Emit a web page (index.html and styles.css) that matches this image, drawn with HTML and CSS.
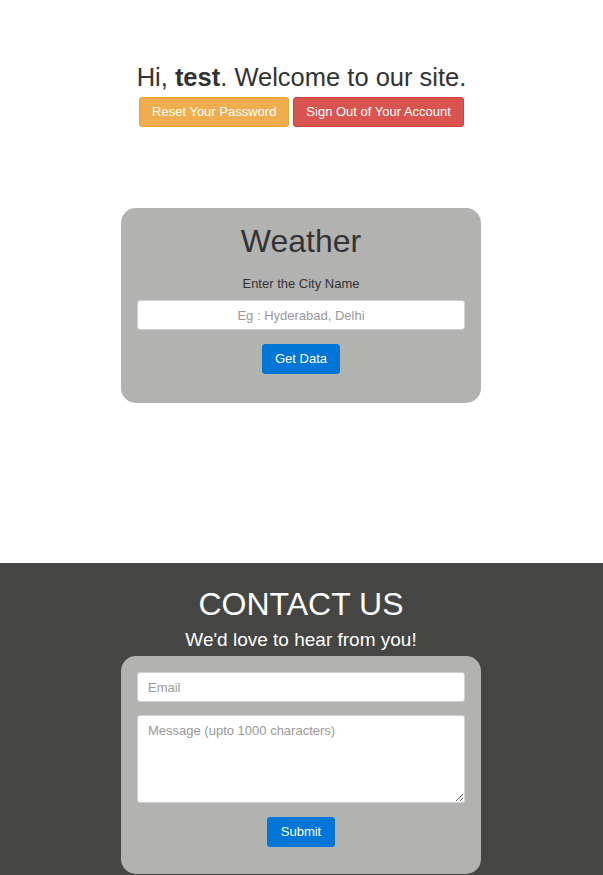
FILE: index.html
```html
<!DOCTYPE html>
<html>
<head>
<meta charset="utf-8">
<title>Welcome</title>
<link rel="stylesheet" href="styles.css">
</head>
<body>
<header class="greeting">
  <h2 class="greeting-title">Hi, <b>test</b>. Welcome to our site.</h2>
  <div class="greeting-actions">
    <a class="btn btn-warning" href="#">Reset Your Password</a>
    <a class="btn btn-danger" href="#">Sign Out of Your Account</a>
  </div>
</header>

<main class="weather-wrap">
  <form class="card weather-card">
    <h1 class="card-title">Weather</h1>
    <label class="city-label" for="city">Enter the City Name</label>
    <input class="field field-center" id="city" type="text" placeholder="Eg : Hyderabad, Delhi">
    <button class="btn btn-primary" type="button">Get Data</button>
  </form>
</main>

<section class="contact">
  <h1 class="contact-title">CONTACT US</h1>
  <p class="contact-sub">We'd love to hear from you!</p>
  <form class="card contact-card">
    <input class="field" type="email" placeholder="Email">
    <textarea class="field field-area" placeholder="Message (upto 1000 characters)"></textarea>
    <button class="btn btn-primary btn-submit" type="button">Submit</button>
  </form>
</section>
</body>
</html>
```
FILE: styles.css
```css
html, body {
  margin: 0;
  padding: 0;
}
body {
  font-family: "Liberation Sans", Arial, sans-serif;
  color: #333;
  background: #fff;
}

.greeting {
  padding-top: 62px;
  display: flex;
  flex-direction: column;
  align-items: center;
}
.greeting-title {
  margin: 0;
  font-size: 25.5px;
  font-weight: normal;
  line-height: 30px;
}
.greeting-title b {
  font-weight: bold;
}
.greeting-actions {
  display: flex;
  gap: 4px;
  margin-top: 5px;
}

.btn {
  display: inline-block;
  font-family: "Liberation Sans", Arial, sans-serif;
  font-size: 13px;
  line-height: 18px;
  padding: 5px 12px;
  border: 1px solid transparent;
  border-radius: 3px;
  color: #fff;
  text-decoration: none;
  cursor: pointer;
}
.btn-warning {
  background: #f0ad4e;
  border-color: #eea236;
}
.btn-danger {
  background: #d9534f;
  border-color: #d43f3a;
}
.btn-primary {
  background: #0275d8;
  border-color: #0275d8;
}
.btn-submit {
  padding-left: 13px;
  padding-right: 13px;
}

.weather-wrap {
  display: flex;
  justify-content: center;
  padding-top: 81px;
  padding-bottom: 160px;
  padding-right: 1px;
}

.card {
  box-sizing: border-box;
  width: 360px;
  background: #b2b2b1;
  border-radius: 15px;
  padding: 16px;
  display: flex;
  flex-direction: column;
  align-items: center;
}

.weather-card {
  padding-bottom: 29px;
}
.card-title {
  margin: 0;
  font-size: 32px;
  font-weight: normal;
  line-height: 35px;
}
.city-label {
  margin-top: 16px;
  font-size: 13px;
  line-height: 18px;
}
.field {
  box-sizing: border-box;
  width: 100%;
  height: 30px;
  margin: 0;
  border: 1px solid #d0d0d0;
  border-radius: 3px;
  background: #fff;
  font-family: "Liberation Sans", Arial, sans-serif;
  font-size: 13px;
  color: #555;
  padding: 5px 10px;
}
.field::placeholder {
  color: #999;
}
.field-center {
  text-align: center;
  margin-top: 7px;
  margin-bottom: 14px;
}

.contact {
  background: #454543;
  padding-top: 24px;
  padding-bottom: 16px;
  padding-right: 1px;
  display: flex;
  flex-direction: column;
  align-items: center;
}
.contact-title {
  margin: 0;
  color: #fff;
  font-size: 32px;
  font-weight: normal;
  line-height: 35px;
}
.contact-sub {
  margin: 6px 0 0;
  color: #fff;
  font-size: 19px;
  line-height: 23px;
}
.contact-card {
  margin-top: 5px;
  padding-bottom: 27px;
}
.field-area {
  height: 88px;
  margin-top: 13px;
  margin-bottom: 14px;
  padding-top: 7px;
  resize: vertical;
}
```
